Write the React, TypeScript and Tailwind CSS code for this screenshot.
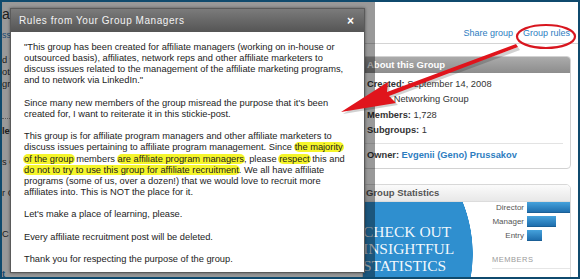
import React from "react";

const Hl = ({ children }: { children: React.ReactNode }) => (
  <mark className="bg-[#f5f52a] text-inherit rounded-[5px] px-[1px] -mx-[1px]">{children}</mark>
);

function RulesModal() {
  return (
    <div className="absolute left-[8px] top-[6px] w-[355px] h-[265px] bg-white border border-[#5a5a5a] shadow-[0_0_3px_rgba(0,0,0,0.45)] flex flex-col">
      <div className="h-[23px] flex items-center justify-between pl-[8px] pr-[10px] bg-gradient-to-b from-[#7b7b7b] to-[#555]">
        <span className="text-[10px] tracking-[0.55px] text-[#f2f2f2]">Rules from Your Group Managers</span>
        <span className="text-[12px] font-bold text-white leading-none">×</span>
      </div>
      <div className="pt-[10px] pl-[13px] text-[9.3px] leading-[11.15px] text-[#1c1c1c] whitespace-nowrap flex flex-col gap-[11.15px]">
        <div>
          <div>"This group has been created for affiliate managers (working on in-house or</div>
          <div>outsourced basis), affiliates, network reps and other affiliate marketers to</div>
          <div>discuss issues related to the management of the affiliate marketing programs,</div>
          <div>and to network via LinkedIn."</div>
        </div>
        <div>
          <div>Since many new members of the group misread the purpose that it's been</div>
          <div>created for, I want to reiterate it in this stickie-post.</div>
        </div>
        <div>
          <div>This group is for affiliate program managers and other affiliate marketers to</div>
          <div>discuss issues pertaining to affiliate program management. Since <Hl>the majority</Hl></div>
          <div>
            <Hl>of the group</Hl> members <Hl>are affiliate program managers</Hl>, please <Hl>respect</Hl> this and
          </div>
          <div>
            <Hl>do not to try to use this group for affiliate recruitment</Hl>. We all have affiliate
          </div>
          <div>programs (some of us, over a dozen!) that we would love to recruit more</div>
          <div>affiliates into. This is NOT the place for it.</div>
        </div>
        <div>Let's make a place of learning, please.</div>
        <div>Every affiliate recruitment post will be deleted.</div>
        <div>Thank you for respecting the purpose of the group.</div>
      </div>
    </div>
  );
}

function Bar({ label, w }: { label: string; w: string }) {
  return (
    <>
      <div className="text-[8px] leading-[11px] text-[#555] text-right">{label}</div>
      <div className="h-[11px]">
        <div className={`h-full ${w} bg-gradient-to-b from-[#45a2dc] to-[#1f6fae] border-b border-[#1a5f96]`} />
      </div>
    </>
  );
}

export default function App() {
  return (
    <div className="relative w-[580px] h-[279px] overflow-hidden border-2 border-[#0f4a6d] bg-white font-['Liberation_Sans',Arial,sans-serif]">
      {/* top strip */}
      <div className="flex h-[42px]">
        <div className="w-[300px] flex flex-col whitespace-nowrap">
          <div className="mt-[5px] text-[14px] leading-[14px] text-[#333]">a</div>
          <div className="mt-[9px] text-[9px] leading-[11px] text-[#2d7dbf]">ssi</div>
        </div>
        <div className="flex-1 flex items-end justify-end gap-[10px] pr-[8px] pb-[4px] border-b border-[#d4d4d4] text-[9px] leading-[11px] text-[#2d7dbf]">
          <span>Share group</span>
          <span>Group rules</span>
        </div>
      </div>

      <div className="flex">
        {/* main column, mostly hidden */}
        <div className="w-[360px] flex flex-col whitespace-nowrap text-[9.3px] leading-[12px] text-[#333]">
          <div className="mt-[10px]">d f</div>
          <div>oth</div>
          <div>gr.</div>
          <div className="mt-[28px] border-t border-dotted border-[#999] w-[300px]" />
          <div className="mt-[6px] font-bold">let</div>
          <div className="mt-[19px]">s C</div>
          <div className="mt-[19px]">r C</div>
          <div className="mt-[29px]">C</div>
          <div className="mt-[28px] font-bold text-[#2d7dbf]">t</div>
        </div>

        {/* sidebar */}
        <div className="w-[209px] flex flex-col">
          <div className="mt-[12px] border border-[#d2d2d2] rounded-[4px] overflow-hidden">
            <div className="h-[16px] flex items-center pl-[4px] bg-gradient-to-b from-[#ababab] to-[#8d8d8d] text-[9.5px] font-bold text-white">
              About this Group
            </div>
            <div className="pt-[4px] pl-[4px] text-[9.3px] leading-[15.3px] text-[#333]">
              <div><b>Created:</b> September 14, 2008</div>
              <div><b>Type:</b> Networking Group</div>
              <div><b>Members:</b> 1,728</div>
              <div><b>Subgroups:</b> 1</div>
            </div>
            <div className="mt-[5px] mr-[7px] border-t border-[#e3e3e3]" />
            <div className="pt-[4px] pb-[5px] pl-[4px] text-[9.3px] leading-[15.3px] font-bold text-[#333]">
              Owner: <span className="text-[#2d7dbf]">Evgenii (Geno) Prussakov</span>
            </div>
          </div>

          <div className="mt-[15px] border border-[#d8d8d8] rounded-t-[5px] overflow-hidden">
            <div className="h-[17px] flex items-center pl-[3px] bg-gradient-to-b from-[#fbfbfb] to-[#e8e8e8] border-b border-[#dcdcdc] text-[9.5px] font-bold text-[#555]">
              Group Statistics
            </div>
            <div className="flex h-[80px]">
              <div className="w-[128px] pt-[21px] bg-[radial-gradient(circle_140px_at_-30px_52px,#2f8fcf_139.5px,transparent_140px)] font-['Liberation_Serif',serif] text-[15.5px] leading-[17px] text-white/95 whitespace-nowrap">
                <div>CHECK OUT</div>
                <div>INSIGHTFUL</div>
                <div>STATISTICS</div>
              </div>
              <div className="flex-1 flex flex-col">
                <div className="grid grid-cols-[1fr_43px] gap-x-[3px] gap-y-[3px]">
                  <Bar label="Director" w="w-[43px]" />
                  <Bar label="Manager" w="w-[29px]" />
                  <Bar label="Entry" w="w-[15px]" />
                </div>
                <div className="mt-[14px] ml-[1px] pb-[3px] border-b border-[#e6e6e6] text-[7.5px] leading-[10px] tracking-[0.5px] text-[#9a9a9a]">
                  MEMBERS
                </div>
              </div>
            </div>
          </div>
        </div>
      </div>

      {/* dim overlay behind the dialog */}
      <div className="absolute left-0 top-0 h-full w-[373px] bg-black/40" />

      <RulesModal />

      {/* red annotation */}
      <svg className="absolute left-0 top-0 pointer-events-none" width="576" height="275" viewBox="0 0 576 275">
        <g transform="translate(-2,-2)">
          <polygon
            points="343,114 390,84 389,94 518,47 520,50 391,98 398,105"
            fill="#000"
            opacity="0.18"
          />
          <polygon
            points="341,112 388,82 387,92 516,44 518,47 389,96 396,103"
            fill="#e0141c"
          />
          <ellipse cx="546" cy="36.5" rx="29" ry="11.5" fill="none" stroke="#d8161f" strokeWidth="2.2" />
        </g>
      </svg>
    </div>
  );
}
